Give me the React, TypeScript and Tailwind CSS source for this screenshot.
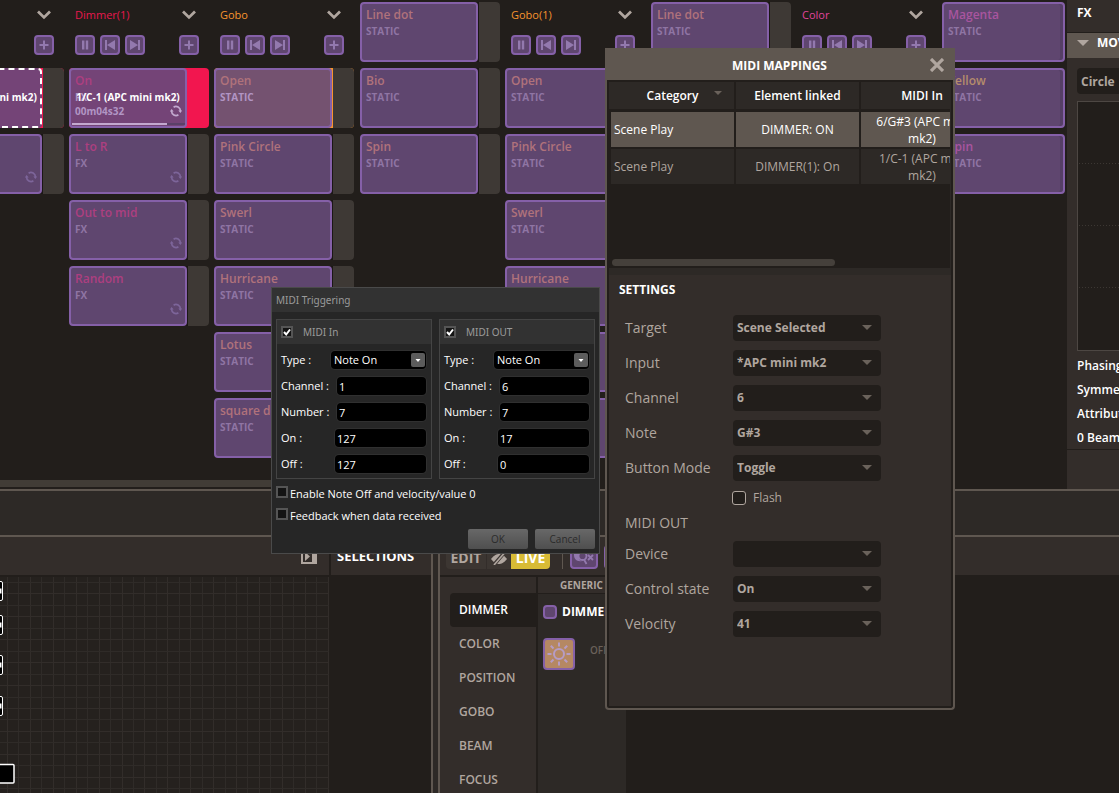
import React from "react";

type Tone = "red" | "orange" | "pink" | "yellow";

type Scene = {
  name: string;
  kind: "FX" | "STATIC";
  tone: Tone;
  active?: "full" | "partial";
  selected?: boolean;
  midi?: string;
  time?: string;
};

type Column = {
  title?: string;
  tone?: Tone;
  lead?: Scene;
  scenes: Scene[];
};

const headTone: Record<Tone, string> = {
  red: "text-[#e8174e]",
  orange: "text-[#f7942e]",
  pink: "text-[#e0449b]",
  yellow: "text-[#d8b040]",
};

const sceneTone: Record<Tone, string> = {
  red: "text-[#ad3f80]",
  orange: "text-[#b0727b]",
  pink: "text-[#a9559f]",
  yellow: "text-[#b58c6c]",
};

const stat = (name: string, tone: Tone = "orange"): Scene => ({ name, kind: "STATIC", tone });
const fx = (name: string): Scene => ({ name, kind: "FX", tone: "red" });

const dimmer: Column = {
  title: "Dimmer",
  tone: "red",
  scenes: [
    { name: "ON", kind: "FX", tone: "red", active: "partial", selected: true, midi: "6/G#3 (APC mini mk2)" },
    fx("L to R"),
  ],
};

const dimmer1: Column = {
  title: "Dimmer(1)",
  tone: "red",
  scenes: [
    { name: "On", kind: "FX", tone: "red", active: "full", midi: "1/C-1 (APC mini mk2)", time: "00m04s32" },
    fx("L to R"),
    fx("Out to mid"),
    fx("Random"),
  ],
};

const gobo: Column = {
  title: "Gobo",
  tone: "orange",
  scenes: [
    { name: "Open", kind: "STATIC", tone: "orange", active: "partial" },
    stat("Pink Circle"),
    stat("Swerl"),
    stat("Hurricane"),
    stat("Lotus"),
    stat("square dot"),
  ],
};

const goboMore: Column = { lead: stat("Line dot"), scenes: [stat("Bio"), stat("Spin")] };

const gobo1: Column = {
  title: "Gobo(1)",
  tone: "orange",
  scenes: [stat("Open"), stat("Pink Circle"), stat("Swerl"), stat("Hurricane"), stat("Lotus"), stat("square dot")],
};

const color: Column = { title: "Color", tone: "pink", scenes: [stat("Red", "pink"), stat("Blue", "pink")] };

function SyncIcon({ bright }: { bright?: boolean }) {
  return (
    <svg viewBox="0 0 12 12" className={`size-3 ${bright ? "text-[#c3a9cf]" : "text-[#7d659a]"}`} fill="none" stroke="currentColor" strokeWidth="1.7">
      <path d="M3.6 2.2A4.4 4.4 0 0 1 10.4 6" />
      <path d="M8.4 9.8A4.4 4.4 0 0 1 1.6 6" />
      <path d="M8.3 5.4h4L10.4 8z M3.7 6.6h-4L1.6 4z" fill="currentColor" stroke="none" />
    </svg>
  );
}

function SceneCell({ scene, wide }: { scene: Scene; wide?: boolean }) {
  const { active, selected } = scene;
  const orange = scene.tone === "orange";
  const fill = active ? (orange ? "bg-[#745270]" : "bg-[#744477]") : "bg-[#5f466f]";
  const border = selected ? "border-dashed border-white" : "border-[#8560a8]";
  const sub = active ? "text-[#b195c4]" : "text-[#8f75a4]";
  const gutter = active ? (orange ? "bg-[#f7942e]" : "bg-[#f2164f]") : "bg-[#1b1715]";
  return (
    <div className={`flex h-[60px] shrink-0 rounded-sm ${wide ? "w-full" : `w-[140px] ${gutter}`}`}>
      <button
        type="button"
        className={`relative flex h-full flex-col overflow-hidden rounded border-2 text-left ${fill} ${border} ${
          wide ? "w-full shadow-[inset_-3px_0_0_#553f66]" : "w-[118px]"
        }`}
      >
        <span className={`mt-0.5 pl-1 text-[12px] leading-[18px] font-semibold whitespace-nowrap ${sceneTone[scene.tone]}`}>
          {scene.name}
        </span>
        <span className={`pl-1 text-[10px] leading-[14px] font-bold ${sub}`}>{scene.kind}</span>
        {scene.kind === "FX" && (
          <span className="flex h-[14px] w-full items-center justify-between pr-[3px] pl-1">
            <span className={`text-[10px] leading-[14px] font-bold ${sub}`}>{scene.time ?? ""}</span>
            {!selected && <SyncIcon bright={!!active} />}
          </span>
        )}
        {scene.time && (
          <span className="mx-px mt-[5px] flex h-0.5 w-full bg-[#5a4068]">
            <span className="w-10/12 bg-[#c3a9cf]" />
          </span>
        )}
        {scene.midi && (
          <span className="absolute inset-x-0 top-[20px] text-center text-[10px] leading-[15px] font-bold whitespace-nowrap text-white">
            {scene.midi}
          </span>
        )}
      </button>
      {!wide && active !== "full" && <span className="ml-px flex-1 rounded-r-sm bg-[#3e3935]" />}
    </div>
  );
}

function PadButton({ label, children }: { label: string; children: React.ReactNode }) {
  return (
    <button
      type="button"
      aria-label={label}
      className="flex size-5 items-center justify-center rounded border-2 border-[#8560a8] bg-[#5f466f] text-[#9379ae]"
    >
      <svg viewBox="0 0 16 16" className="size-4 shrink-0" fill="currentColor">
        {children}
      </svg>
    </button>
  );
}

function ColumnHead({ title, tone }: { title: string; tone: Tone }) {
  return (
    <div className="h-[60px] w-[140px] shrink-0 pr-[10px] pl-[6px]">
      <div className="flex h-[26px] items-center justify-between pr-[3px]">
        <h2 className={`text-[11px] leading-4 font-medium ${headTone[tone]}`}>{title}</h2>
        <svg viewBox="0 0 14 10" className="h-[10px] w-[14px] text-[#b0a69f]" fill="none" stroke="currentColor" strokeWidth="2.8">
          <path d="M1 1.6 7 7.4 13 1.6" />
        </svg>
      </div>
      <div className="mt-[7px] flex gap-[5px]">
        <PadButton label="Pause">
          <path d="M5 3.5h2.4v9H5zM8.8 3.5h2.4v9H8.800z" />
        </PadButton>
        <PadButton label="Previous">
          <path d="M3 3h2v10H3zM13 3v10L5 8z" />
        </PadButton>
        <PadButton label="Next">
          <path d="M11 3h2v10h-2zM3 3v10l8-5z" />
        </PadButton>
        <span className="flex-1" />
        <PadButton label="Add scene">
          <path d="M7 3.500h2v3.500h3.500v2H9v3.500H7V9H3.500V7H7z" />
        </PadButton>
      </div>
    </div>
  );
}

function BoardColumn({ column }: { column: Column }) {
  return (
    <div className="flex flex-col gap-[6px]">
      {column.title && <ColumnHead title={column.title} tone={column.tone ?? "red"} />}
      {column.lead && <SceneCell scene={column.lead} />}
      {column.scenes.map((s) => (
        <SceneCell key={s.name} scene={s} />
      ))}
    </div>
  );
}

function Board() {
  return (
    <section className="flex min-w-0 flex-1 flex-col overflow-hidden bg-[#221e1b] pt-0.5">
      <div className="flex flex-1 gap-[6px] pr-0.5">
        <div className="flex gap-[5px]">
          <div className="flex w-16 justify-end overflow-hidden">
            <BoardColumn column={dimmer} />
          </div>
          <BoardColumn column={dimmer1} />
          <BoardColumn column={gobo} />
        </div>
        <div className="flex gap-[5px]">
          <BoardColumn column={goboMore} />
          <BoardColumn column={gobo1} />
        </div>
        <div className="flex gap-[5px]">
          <BoardColumn column={goboMore} />
          <BoardColumn column={color} />
        </div>
        <div className="flex flex-1 flex-col gap-[6px]">
          <SceneCell wide scene={stat("Magenta", "pink")} />
          <SceneCell wide scene={stat("Yellow", "yellow")} />
          <SceneCell wide scene={stat("Spin", "pink")} />
        </div>
      </div>
      <div className="mb-0.5 h-[7px] w-1/2 bg-[#413c36]" />
    </section>
  );
}

function FxPanel() {
  return (
    <aside className="flex w-[52px] shrink-0 flex-col overflow-hidden bg-[#332d2a] text-[12px] font-semibold whitespace-nowrap text-white">
      <h2 className="h-8 pl-[10px] leading-[26px] font-bold">FX</h2>
      <button type="button" className="flex h-[26px] items-center border-t border-[#221e1b] bg-[#5f5750] pb-[6px] pl-[10px] font-bold">
        <svg viewBox="0 0 12 6" className="mr-2 h-[6px] w-3 shrink-0 text-[#b0a69f]" fill="currentColor">
          <path d="M0 0h12L6 6z" />
        </svg>
        MOVEMENT
      </button>
      <button type="button" className="mt-[10px] ml-[10px] h-[26px] rounded-l bg-[#221e1b] pt-0.5 pl-1 text-left font-bold text-[#b0a69f]">
        Circle
      </button>
      <div className="mt-[7px] ml-[10px] h-[250px] border border-r-0 border-[#4d4743] bg-[#221e1b]">
        <svg className="h-full w-full" stroke="#3c3733" strokeDasharray="1 2">
          <path d="M1 61.500H60M1 123.500H60M1 185.500H60" />
        </svg>
      </div>
      <div className="flex flex-col gap-2 border-b border-[#221e1b] pt-[7px] pb-[3px] pl-[10px] leading-4">
        <p>Phasing</p>
        <p>Symmetry</p>
        <p>Attributes</p>
        <p>0 Beams</p>
      </div>
    </aside>
  );
}

function StageCanvas() {
  const xs = Array.from({ length: 29 }, (_, i) => Math.round(7 + 11.45 * i));
  const ys = Array.from({ length: 24 }, (_, i) => Math.round(5 + 11.45 * i));
  return (
    <svg className="h-full w-full bg-[#25211e]">
      {xs.map((x, i) => (
        <rect key={`x${x}`} x={x} y="0" width="1" height="100%" fill={i % 2 ? "#2f2b28" : "#322d2a"} />
      ))}
      {ys.map((y, i) => (
        <rect key={`y${y}`} x="0" y={y} width="100%" height="1" fill={i % 2 ? "#322d2a" : "#2f2b28"} />
      ))}
      {[4, 38, 78, 119].map((y) => (
        <g key={y}>
          <rect x="-16" y={y + 0.5} width="18.500" height="19" rx="1.500" fill="#000" stroke="#fff" />
          <path d={`M-2 ${y + 7.5}h3.500v5h-3.500z`} fill="#fff" />
        </g>
      ))}
      <rect x="-16" y="187.500" width="30" height="18.500" rx="1" fill="#000" stroke="#fff" strokeWidth="1.500" />
    </svg>
  );
}

const groups = ["DIMMER", "COLOR", "POSITION", "GOBO", "BEAM", "FOCUS"];

function Workspace() {
  return (
    <div className="flex h-64 flex-1 overflow-hidden">
      <section className="flex w-[331px] shrink-0 flex-col border-r-2 border-[#221e1b]">
        <header className="flex h-10 shrink-0 items-start justify-end border-b-2 border-[#221e1b] bg-[#332d2a] pt-3 pr-3">
          <button type="button" aria-label="Toggle panel">
            <svg viewBox="0 0 16 16" className="size-4">
              <path d="M0 0h16v15H0z" fill="#b0a69f" />
              <path d="M2 2h9v11H2z" fill="#332d2a" />
              <path d="M4 3l5 4.500L4 12z" fill="#b0a69f" />
            </svg>
          </button>
        </header>
        <div className="min-h-0 flex-1">
          <StageCanvas />
        </div>
      </section>
      <section className="w-[102px] shrink-0 border-r-2 border-[#5f5750] bg-[#221e1b]">
        <h2 className="h-[38px] bg-[#332d2a] pl-[6px] text-[13px] leading-[39px] font-bold text-white">SELECTIONS</h2>
      </section>
      <section className="ml-[5px] flex min-w-0 flex-1 flex-col border-l-2 border-[#5f5750] bg-[#221e1b]">
        <header className="flex h-10 shrink-0 items-start border-b-2 border-[#221e1b] bg-[#332d2a] pt-2 pl-[6px] text-[14px] font-bold">
          <button type="button" className="h-6 w-10 rounded-l bg-[#3c3632] pt-px leading-6 text-[#b0a69f]">
            EDIT
          </button>
          <button type="button" aria-label="Blind" className="flex h-6 w-[25px] items-center justify-center border-l border-[#332d2a] bg-[#3c3632]">
            <svg viewBox="0 0 16 12" className="mt-1 h-3 w-4 text-[#b0a69f]">
              <path d="M0 6C3 2 6 1 8 1s5 1 8 5c-3 4-6 5-8 5S3 10 0 6z" fill="currentColor" />
              <path d="M4 10.500 13 0" stroke="#3c3632" strokeWidth="3.500" />
              <path d="M3 12 13 .5" stroke="currentColor" strokeWidth="1.600" />
            </svg>
          </button>
          <button type="button" className="h-6 w-[39px] rounded-r bg-[#d8bb35] pt-px leading-6 text-white">
            LIVE
          </button>
          <span className="mr-[7px] ml-3 h-6 w-px bg-[#5f5750]" />
          <button type="button" aria-label="Clear search" className="flex h-6 w-7 items-center justify-center rounded border-2 border-[#8560a8] bg-[#5f466f]">
            <svg viewBox="0 0 22 16" className="h-4 w-[22px] text-[#9379ae]" fill="none" stroke="currentColor" strokeWidth="1.800">
              <path d="M1 2h5v7.500c0 1.500 1 2.500 3 2.500C4 13 1 10 1 6z" fill="currentColor" stroke="none" />
              <circle cx="9.500" cy="7" r="4" />
              <path d="M11 10.500l2.500 4.500M15 6l5 5M20 6l-5 5" />
            </svg>
          </button>
          <button type="button" aria-label="More" className="ml-[6px] h-6 w-7 rounded border-2 border-[#8560a8] bg-[#5f466f]" />
        </header>
        <div className="flex min-h-0 flex-1">
          <nav className="flex w-[98px] shrink-0 flex-col border-r-2 border-[#221e1b] bg-[#332d2a] pt-4 pl-[10px]">
            {groups.map((g, i) => (
              <a
                key={g}
                href="#"
                className={`h-[34px] shrink-0 rounded-l pl-[9px] text-[12px] leading-[34px] font-semibold ${
                  i === 0 ? "bg-[#221e1b] text-white" : "text-[#b0a69f]"
                }`}
              >
                {g}
              </a>
            ))}
          </nav>
          <div className="w-[88px] shrink-0 overflow-hidden bg-[#2d2926] whitespace-nowrap">
            <h3 className="h-[17px] border-b border-[#221e1b] bg-[#332d2a] pl-[22px] text-[10px] leading-[17px] font-bold text-[#b0a69f]">GENERIC</h3>
            <label className="flex h-9 items-center gap-[5px] pl-[5px] text-[12px] font-bold text-white">
              <input type="checkbox" className="size-[14px] appearance-none rounded border-2 border-[#8560a8] bg-[#5f466f]" />
              DIMMER
            </label>
            <div className="mt-2 flex items-center gap-[15px] pl-[5px]">
              <button type="button" aria-label="Lamp" className="flex size-8 shrink-0 items-center justify-center rounded border-2 border-[#8560a8] bg-[#b58863]">
                <svg viewBox="0 0 24 24" className="size-6 text-[#b69cc6]" fill="none" stroke="currentColor" strokeWidth="2">
                  <circle cx="12" cy="12" r="5" />
                  <path d="M12 .5v4M12 19.500v4M.5 12h4M19.500 12h4M3.800 3.800l2.700 2.700M17.500 17.500l2.700 2.700M3.800 20.200l2.700-2.700M17.500 6.500l2.700-2.700" />
                </svg>
              </button>
              <span className="mb-2 text-[10px] font-semibold text-[#6a615a]">OFF</span>
            </div>
          </div>
        </div>
      </section>
    </div>
  );
}

function SettingSelect({ id, label, value }: { id: string; label: string; value: string }) {
  return (
    <>
      <label htmlFor={id} className="pt-px text-[14px] leading-[26px]">
        {label}
      </label>
      <div className="grid items-center">
        <select
          id={id}
          defaultValue={value}
          className="col-start-1 row-start-1 h-[26px] appearance-none rounded bg-[#221e1b] pt-px pl-1 text-[12px] font-bold text-[#b0a69f]"
        >
          <option>{value}</option>
        </select>
        <svg viewBox="0 0 10 5" className="pointer-events-none col-start-1 row-start-1 mr-[9px] h-[5px] w-[10px] justify-self-end" fill="#6a625b">
          <path d="M0 0h10L5 5z" />
        </svg>
      </div>
    </>
  );
}

function MappingsDialog() {
  const th = "h-[27px] bg-[#2d2926] p-0 font-semibold text-white";
  return (
    <section
      role="dialog"
      aria-label="MIDI Mappings"
      className="absolute top-12 left-[605px] flex h-[662px] w-[350px] flex-col rounded-b-sm border-2 border-t-0 border-[#5f5750] bg-[#221e1b]"
    >
      <header className="grid h-8 shrink-0 grid-cols-[1fr_auto] items-center bg-[#5f5750] pr-[9px]">
        <h2 className="pt-1 pl-[22px] text-center text-[12px] leading-4 font-bold text-white">MIDI MAPPINGS</h2>
        <button type="button" aria-label="Close">
          <svg viewBox="0 0 14 14" className="mt-0.5 size-[14px] text-[#b0a69f]" stroke="currentColor" strokeWidth="3.200">
            <path d="M1 1l12 12M13 1L1 13" />
          </svg>
        </button>
      </header>
      <div className="m-0.5 flex min-h-0 flex-1 flex-col overflow-hidden bg-[#332d2a]">
        <div className="flex h-[186px] shrink-0 flex-col overflow-hidden border-r border-[#2d2926] bg-[#221e1b]">
          <table className="w-[374px] table-fixed border-separate border-spacing-x-0 border-spacing-y-0 text-[12px] leading-[17px]">
            <colgroup>
              <col className="w-[127px]" />
              <col className="w-[125px]" />
              <col className="w-[122px]" />
            </colgroup>
            <thead>
              <tr>
                <th className={`${th} border-r-2 border-[#221e1b]`}>
                  <span className="grid grid-cols-[1fr_auto] items-center pr-3">
                    <span className="pl-[22px]">Category</span>
                    <svg viewBox="0 0 8 4" className="mb-[5px] h-1 w-2" fill="#6a625b">
                      <path d="M0 0h8L4 4z" />
                    </svg>
                  </span>
                </th>
                <th className={`${th} border-r-2 border-[#221e1b]`}>Element linked</th>
                <th className={th}>MIDI In</th>
              </tr>
            </thead>
            <tbody>
              {[
                ["Scene Play", "DIMMER: ON", "6/G#3 (APC mini mk2)"],
                ["Scene Play", "DIMMER(1): On", "1/C-1 (APC mini mk2)"],
              ].map((row, i) => {
                const td = `border-[#221e1b] p-0 ${
                  i === 0 ? "h-[38px] border-t-3 bg-[#5f5750] text-white" : "h-[37px] border-t-2 bg-[#2d2926] text-[#b0a69f]"
                }`;
                return (
                  <tr key={row[1]}>
                    <td className={`${td} border-r-2 border-l-2 pl-[3px]`}>{row[0]}</td>
                    <td className={`${td} border-r-2 text-center`}>{row[1]}</td>
                    <td className={`${td} px-3 text-center`}>{row[2]}</td>
                  </tr>
                );
              })}
            </tbody>
          </table>
          <div className="mt-auto mb-0.5 ml-[3px] h-[7px] w-[223px] rounded-full bg-[#45403b]" />
        </div>
        <div className="h-[7px] shrink-0 bg-[#2d2926]" />
        <h3 className="pt-[7px] pl-[10px] text-[12px] leading-4 font-bold text-white">SETTINGS</h3>
        <div className="mt-4 grid grid-cols-[108px_148px] gap-y-2 pl-4 text-[#b0a69f]">
          <SettingSelect id="target" label="Target" value="Scene Selected" />
          <SettingSelect id="input" label="Input" value="*APC mini mk2" />
          <SettingSelect id="channel" label="Channel" value="6" />
          <SettingSelect id="note" label="Note" value="G#3" />
          <SettingSelect id="mode" label="Button Mode" value="Toggle" />
        </div>
        <label className="mt-[9px] ml-[123px] flex h-4 items-center gap-[7px] text-[12px] text-[#b0a69f]">
          <input type="checkbox" className="size-[14px] appearance-none rounded-[3px] border border-[#b0a69f] bg-[#221e1b]" />
          Flash
        </label>
        <h4 className="mt-[6px] pl-4 text-[14px] leading-[22px] text-[#b0a69f]">MIDI OUT</h4>
        <div className="mt-[6px] grid grid-cols-[108px_148px] gap-y-2 pl-4 text-[#b0a69f]">
          <SettingSelect id="device" label="Device" value="" />
          <SettingSelect id="control" label="Control state" value="On" />
          <SettingSelect id="velocity" label="Velocity" value="41" />
        </div>
      </div>
    </section>
  );
}

function TickBox({ id, checked }: { id: string; checked?: boolean }) {
  return (
    <span className="grid size-3 shrink-0">
      <input
        id={id}
        type="checkbox"
        defaultChecked={checked}
        className="peer col-start-1 row-start-1 size-3 appearance-none border-2 border-[#555] bg-[#141414]"
      />
      <svg viewBox="0 0 12 12" className="pointer-events-none invisible col-start-1 row-start-1 size-3 peer-checked:visible" fill="none" stroke="#fff" strokeWidth="2">
        <path d="M3 6l2.200 2.500L9 3.500" />
      </svg>
    </span>
  );
}

function TriggerField({ id, label, value, narrow }: { id: string; label: string; value: string; narrow?: boolean }) {
  return (
    <div className="flex h-[18px] items-center justify-between">
      <label htmlFor={id}>{label} :</label>
      <input
        id={id}
        defaultValue={value}
        className={`h-[18px] rounded bg-black px-0.5 text-white shadow-[0_0_0_1px_#303030] ${narrow ? "w-[89px]" : "w-[91px]"}`}
      />
    </div>
  );
}

function TriggerGroup({ id, title, values }: { id: string; title: string; values: string[] }) {
  return (
    <fieldset className="min-w-0 flex-1 border border-[#444]">
      <div className="flex h-6 items-center gap-[10px] bg-[#323232] pl-1 font-['Noto_Sans',sans-serif] text-[10px] text-[#9b9b9b]">
        <TickBox id={`${id}-on`} checked />
        <label htmlFor={`${id}-on`}>{title}</label>
      </div>
      <div className="flex flex-col gap-2 pt-[7px] pr-[5px] pb-[5px] pl-1">
        <div className="flex h-[18px] items-center justify-between">
          <label htmlFor={`${id}-type`}>Type :</label>
          <div className="grid w-[95px] items-center">
            <select
              id={`${id}-type`}
              className="col-start-1 row-start-1 h-[18px] appearance-none rounded bg-black pl-[3px] text-white shadow-[0_0_0_1px_#303030]"
            >
              <option>Note On</option>
            </select>
            <svg viewBox="0 0 14 14" className="pointer-events-none col-start-1 row-start-1 mr-px size-[14px] justify-self-end">
              <rect width="14" height="14" rx="2" fill="#5c5c5c" />
              <path d="M4.500 6h5L7 9z" fill="#fff" />
            </svg>
          </div>
        </div>
        <TriggerField id={`${id}-channel`} label="Channel" value={values[0]} narrow />
        <TriggerField id={`${id}-number`} label="Number" value={values[1]} narrow />
        <TriggerField id={`${id}-onv`} label="On" value={values[2]} />
        <TriggerField id={`${id}-off`} label="Off" value={values[3]} />
      </div>
    </fieldset>
  );
}

function TriggerDialog() {
  return (
    <section
      role="dialog"
      aria-label="MIDI Triggering"
      className="absolute top-[287px] left-[271px] flex w-[329px] flex-col border border-[#4a4a4a] bg-[#262626] text-[11px] leading-4 text-white"
    >
      <h2 className="h-6 bg-[#323232] pl-1 font-['Noto_Sans',sans-serif] text-[10px] leading-6 text-[#9b9b9b]">MIDI Triggering</h2>
      <div className="mt-[7px] flex gap-[7px] px-1">
        <TriggerGroup id="in" title="MIDI In" values={["1", "7", "127", "127"]} />
        <TriggerGroup id="out" title="MIDI OUT" values={["6", "7", "17", "0"]} />
      </div>
      <div className="mt-[7px] flex flex-col gap-[6px] pl-1">
        <div className="flex gap-0.5">
          <TickBox id="note-off" />
          <label htmlFor="note-off">Enable Note Off and velocity/value 0</label>
        </div>
        <div className="flex gap-0.5">
          <TickBox id="feedback" />
          <label htmlFor="feedback">Feedback when data received</label>
        </div>
      </div>
      <div className="mt-[5px] mb-1 flex justify-end gap-[7px] pr-1 text-[10px] text-[#2b2b2b]">
        <button type="button" className="h-5 w-[60px] rounded-xs bg-linear-to-b from-[#686868] to-[#4f4f4f]">
          OK
        </button>
        <button type="button" className="h-5 w-[60px] rounded-xs bg-linear-to-b from-[#686868] to-[#4f4f4f]">
          Cancel
        </button>
      </div>
    </section>
  );
}

export default function App() {
  return (
    <main className="relative flex min-h-screen flex-col overflow-hidden bg-[#2d2926] font-['Open_Sans','Noto_Sans',sans-serif]">
      <div className="flex h-[489px] shrink-0">
        <Board />
        <FxPanel />
      </div>
      <div className="h-12 shrink-0 border-y-2 border-[#5f5750] bg-[#2d2926]" />
      <Workspace />
      <MappingsDialog />
      <TriggerDialog />
    </main>
  );
}
